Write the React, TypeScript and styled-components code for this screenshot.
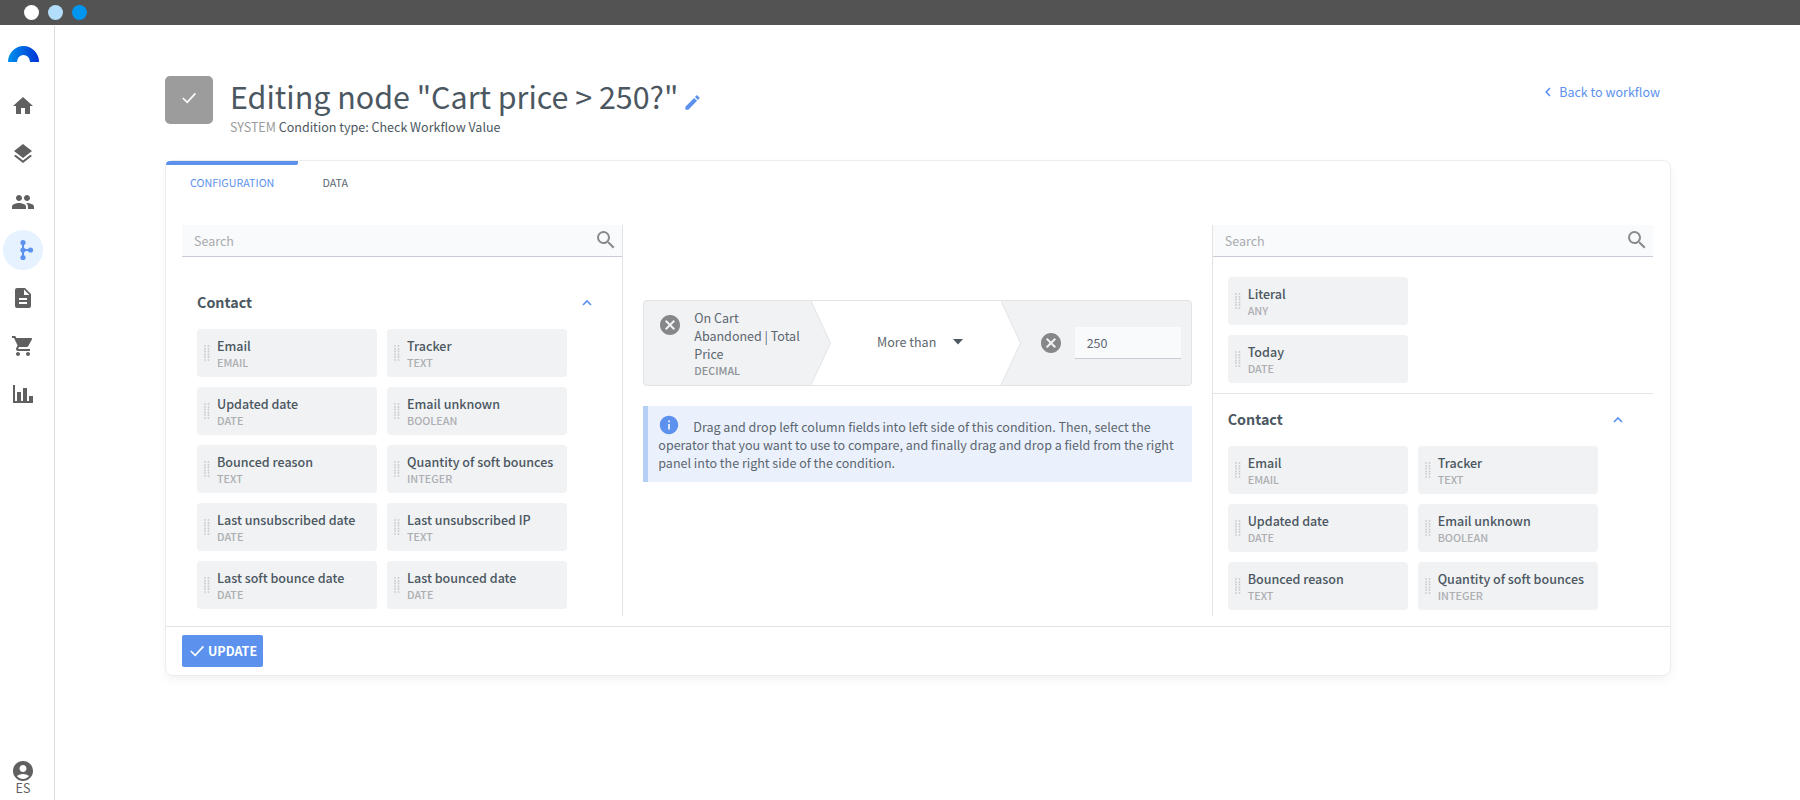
import React, { useState } from 'react';
import styled, { createGlobalStyle, css } from 'styled-components';
import {
  MdAccountCircle,
  MdCancel,
  MdDescription,
  MdEdit,
  MdGroup,
  MdHome,
  MdInfo,
  MdLayers,
  MdSearch,
  MdShoppingCart,
} from 'react-icons/md';

const color = {
  text: '#4b5761',
  body: '#5c6670',
  muted: '#acaeb1',
  icon: '#606060',
  primary: '#5c92ee',
  line: '#e2e3e5',
  panel: '#f1f2f4',
  field: '#f8fafc',
};

const GlobalStyle = createGlobalStyle`
  *, *::before, *::after { box-sizing: border-box; }
  body {
    margin: 0;
    background: #fff;
    color: ${color.text};
    font-family: 'Source Sans Pro', 'Noto Sans CJK SC', sans-serif;
    font-size: 14px;
    line-height: 18px;
    /* keeps the fallback face at the x-height of Source Sans */
    font-size-adjust: 0.486;
  }
  button, input, select {
    font: inherit;
    font-size-adjust: 0.486;
    color: inherit;
  }
  svg { display: block; flex: none; }
`;

/* ---------- shell ---------- */

const TopBar = styled.div`
  display: flex;
  align-items: center;
  gap: 9px;
  height: 25px;
  margin-bottom: 1px;
  padding-left: 24px;
  background: #535353;
`;

const WindowDot = styled.span<{ $fill: string }>`
  width: 15px;
  height: 15px;
  border-radius: 50%;
  background: ${(p) => p.$fill};
`;

const Shell = styled.div`
  display: flex;
  min-height: calc(100vh - 26px);
`;

const Sidebar = styled.nav`
  display: flex;
  flex-direction: column;
  flex: none;
  width: 55px;
  padding: 20px 0 7px;
  border-right: 1px solid #dcdcdc;
`;

const Logo = styled.a`
  margin: 0 0 24px 8px;
`;

const NavList = styled.ul`
  display: grid;
  gap: 8px;
  margin: 0;
  padding: 0 0 0 3px;
  list-style: none;
`;

const NavLink = styled.a<{ $active?: boolean }>`
  display: flex;
  align-items: center;
  justify-content: center;
  width: 40px;
  height: 40px;
  border-radius: 50%;
  color: ${(p) => (p.$active ? color.primary : color.icon)};
  background: ${(p) => (p.$active ? '#e6f2ff' : 'transparent')};
`;

const Account = styled.button`
  display: flex;
  flex-direction: column;
  align-items: center;
  width: 40px;
  margin: auto 0 0 3px;
  padding: 0;
  border: 0;
  background: none;
  color: ${color.icon};
  line-height: 10px;
`;

/* ---------- page header ---------- */

const Main = styled.main`
  flex: 1;
  min-width: 0;
  padding: 50px 129px 40px 110px;
`;

const Header = styled.header`
  display: flex;
  align-items: flex-start;
  margin-bottom: 24px;
`;

const NodeBadge = styled.div`
  display: flex;
  justify-content: center;
  width: 48px;
  height: 48px;
  margin-right: 17px;
  padding-top: 15px;
  border-radius: 5px;
  background: #9c9c9c;
  color: #fff;
`;

const HeaderText = styled.div`
  flex: 1;
`;

const TitleRow = styled.div`
  display: flex;
  align-items: flex-end;
  gap: 5px;
  margin-bottom: 2px;
`;

const Title = styled.h1`
  margin: 0;
  font-size: 34px;
  font-weight: 400;
  line-height: 40px;
`;

const EditButton = styled.button`
  padding: 0 0 4px;
  border: 0;
  background: none;
  color: ${color.primary};
`;

const Subtitle = styled.p`
  margin: 0;
`;

const Origin = styled.span`
  color: #9c9c9c;
`;

const BackLink = styled.a`
  display: flex;
  align-items: center;
  gap: 8px;
  padding: 7px 11px 0 0;
  color: ${color.primary};
  text-decoration: none;
`;

/* ---------- card ---------- */

const Card = styled.section`
  border: 1px solid #ececec;
  border-radius: 8px;
  box-shadow: 0 4px 10px rgba(0, 0, 0, 0.05);
`;

const Tabs = styled.div`
  display: flex;
  margin-bottom: 30px;
`;

const Tab = styled.button<{ $active?: boolean }>`
  position: relative;
  padding: 14px 24px 4px;
  border: 0;
  background: none;
  color: ${color.body};
  font-size: 12px;
  line-height: 16px;
  ${(p) =>
    p.$active &&
    css`
      color: ${color.primary};
      &::before {
        content: '';
        position: absolute;
        inset: 0 0 auto 0;
        height: 4px;
        border-radius: 8px 0 4px 0;
        background: ${color.primary};
      }
    `}
`;

const Columns = styled.div`
  display: grid;
  grid-template-columns: 3fr 4fr 3fr;
  padding: 0 17px 10px 16px;
`;

const FieldPanel = styled.div<{ $side: 'left' | 'right' }>`
  min-width: 0;
  ${(p) => (p.$side === 'left' ? 'border-right' : 'border-left')}: 1px solid ${color.line};
  padding-bottom: 6px;
`;

const SearchBox = styled.label`
  display: flex;
  height: 32px;
  margin-bottom: 20px;
  padding: 0 4px 0 12px;
  border-bottom: 1px solid #c8ccd6;
  background: ${color.field};
  color: #8a8a8a;
  svg { margin-top: 3px; }
`;

const SearchInput = styled.input`
  flex: 1;
  min-width: 0;
  padding: 0;
  border: 0;
  outline: 0;
  background: none;
  &::placeholder { color: #a9abae; opacity: 1; }
`;

const GroupHeader = styled.button`
  display: flex;
  align-items: center;
  justify-content: space-between;
  width: 100%;
  padding: 13px 30px 15px 15px;
  border: 0;
  background: none;
  font-size: 16px;
  font-weight: 700;
  line-height: 24px;
  text-align: left;
`;

const ChipGrid = styled.div<{ $columns: number }>`
  display: grid;
  grid-template-columns: repeat(${(p) => p.$columns}, 180px);
  gap: 10px;
  padding-left: 15px;
`;

const Divider = styled.hr`
  height: 1px;
  margin: 10px 0 0;
  border: 0;
  background: ${color.line};
`;

const ChipBox = styled.div`
  display: flex;
  align-items: center;
  gap: 7px;
  height: 48px;
  padding-left: 7px;
  border-radius: 4px;
  background: ${color.panel};
  cursor: grab;
`;

const ChipText = styled.div`
  padding-top: 2px;
  white-space: nowrap;
`;

const ChipName = styled.div`
  font-weight: 500;
`;

const TypeLabel = styled.div`
  color: ${color.muted};
  font-size: 12px;
  font-weight: 500;
  line-height: 16px;
`;

/* ---------- condition ---------- */

const Workspace = styled.div`
  padding: 75px 20px 0;
`;

const Condition = styled.div`
  display: grid;
  grid-template-columns: minmax(0, 7fr) minmax(0, 8fr) minmax(0, 8fr);
  min-height: 86px;
  margin-bottom: 20px;
  border: 1px solid ${color.line};
  border-radius: 4px;
  background: ${color.panel};
  color: ${color.body};
`;

const LeftOperand = styled.div`
  display: flex;
  align-items: flex-start;
  gap: 12px;
  padding: 8px 6px 6px 14px;
`;

const Operator = styled.div`
  position: relative;
  display: flex;
  align-items: center;
  justify-content: center;
  padding: 0 0 2px 29px;
  background: #fff;
`;

const RightOperand = styled.div`
  position: relative;
  display: flex;
  align-items: center;
  gap: 12px;
  padding: 0 10px 0 38px;
`;

const TipSvg = styled.svg`
  position: absolute;
  top: 0;
  left: 0;
  width: 20px;
  height: 100%;
`;

const OperandText = styled.div`
  min-width: 0;
`;

const OperandType = styled(TypeLabel)`
  color: #8c9094;
`;

const RemoveButton = styled.button`
  padding: 0;
  border: 0;
  background: none;
  color: #858788;
`;

const LeftRemove = styled(RemoveButton)`
  margin-top: 4px;
`;

const SelectWrap = styled.label`
  display: flex;
  align-items: center;
`;

const OperatorSelect = styled.select`
  appearance: none;
  padding: 0 26px 0 0;
  margin-right: -10px;
  border: 0;
  outline: 0;
  background: none;
`;

const ValueInput = styled.input`
  flex: 1;
  min-width: 0;
  height: 32px;
  padding: 0 12px;
  border: 0;
  border-bottom: 1px solid #c8ccd6;
  outline: 0;
  background: ${color.field};
`;

const Hint = styled.p`
  margin: 0;
  padding: 12px 15px 10px 10px;
  border-left: 5px solid #b3cff5;
  background: #eaf1fc;
  color: ${color.body};
  svg {
    float: left;
    margin: -4px 13px 0 0;
    color: ${color.primary};
  }
`;

/* ---------- footer ---------- */

const Footer = styled.footer`
  padding: 8px 16px;
  border-top: 1px solid ${color.line};
`;

const UpdateButton = styled.button`
  display: flex;
  align-items: center;
  gap: 4px;
  height: 32px;
  padding: 0 6px 0 8px;
  border: 0;
  border-radius: 2px;
  background: ${color.primary};
  color: #fff;
  font-weight: 700;
`;

/* ---------- drawings ---------- */

const LogoMark = () => (
  <svg width="31" height="16" viewBox="0 0 31 16" aria-hidden="true">
    <defs>
      <linearGradient id="logo" x1="0" x2="1">
        <stop offset="0" stopColor="#0092ec" />
        <stop offset="1" stopColor="#0033d6" />
      </linearGradient>
    </defs>
    <path d="M0 16a15.500 16 0 0 1 31 0h-9a6.500 7 0 0 0-13 0z" fill="url(#logo)" />
  </svg>
);

const FlowIcon = () => (
  <svg width="24" height="24" viewBox="0 0 24 24" fill="currentColor" aria-hidden="true">
    <path d="M12 4.500V19.500M12 12H19.500" stroke="currentColor" strokeWidth="2" />
    <circle cx="12" cy="4.500" r="2.600" />
    <circle cx="12" cy="12" r="2.600" />
    <circle cx="12" cy="19.500" r="2.600" />
    <circle cx="19.500" cy="12" r="2.600" />
  </svg>
);

const ChartIcon = () => (
  <svg width="24" height="24" viewBox="0 0 24 24" fill="currentColor" aria-hidden="true">
    <path d="M2 3h2v16h2V10h4v9h2V6h4v13h2v-5h4v7H2z" />
  </svg>
);

const CheckIcon = ({ size = 14 }: { size?: number }) => (
  <svg width={size} height={size} viewBox="0 0 14 14" fill="none" stroke="currentColor" strokeWidth="1.600" aria-hidden="true">
    <path d="M.8 7l4.400 4.400L13.400 2.400" />
  </svg>
);

const ChevronUp = () => (
  <svg width="10" height="8" viewBox="0 0 10 8" fill="none" stroke={color.primary} strokeWidth="1.700" aria-hidden="true">
    <path d="M1 7l4-4 4 4" />
  </svg>
);

const ChevronLeft = () => (
  <svg width="6" height="10" viewBox="0 0 6 10" fill="none" stroke="currentColor" strokeWidth="1.600" aria-hidden="true">
    <path d="M5 1L1.200 5 5 9" />
  </svg>
);

const Caret = () => (
  <svg width="10" height="6" viewBox="0 0 10 6" fill={color.text} aria-hidden="true">
    <path d="M0 0h10L5 5.500z" />
  </svg>
);

const DragDots = () => (
  <svg width="6" height="16" viewBox="0 0 6 16" fill="#c9ccd0" aria-hidden="true">
    {[1, 4, 6.5, 9.5, 12, 15].map((y) => (
      <React.Fragment key={y}>
        <circle cx="1" cy={y} r="0.900" />
        <circle cx="4.500" cy={y} r="0.900" />
      </React.Fragment>
    ))}
  </svg>
);

const Tip = ({ fill }: { fill: string }) => (
  <TipSvg viewBox="0 0 20 84" preserveAspectRatio="none" aria-hidden="true">
    <path d="M0 0L19.500 42 0 84z" fill={fill} />
    <path d="M0 0L19.500 42 0 84" fill="none" stroke={color.line} />
  </TipSvg>
);

/* ---------- data ---------- */

type Field = { name: string; type: string };

const contactFields: Field[] = [
  { name: 'Email', type: 'EMAIL' },
  { name: 'Tracker', type: 'TEXT' },
  { name: 'Updated date', type: 'DATE' },
  { name: 'Email unknown', type: 'BOOLEAN' },
  { name: 'Bounced reason', type: 'TEXT' },
  { name: 'Quantity of soft bounces', type: 'INTEGER' },
  { name: 'Last unsubscribed date', type: 'DATE' },
  { name: 'Last unsubscribed IP', type: 'TEXT' },
  { name: 'Last soft bounce date', type: 'DATE' },
  { name: 'Last bounced date', type: 'DATE' },
];

const valueFields: Field[] = [
  { name: 'Literal', type: 'ANY' },
  { name: 'Today', type: 'DATE' },
];

const navItems = [
  { label: 'Home', icon: <MdHome size={24} /> },
  { label: 'Layers', icon: <MdLayers size={24} /> },
  { label: 'Contacts', icon: <MdGroup size={24} /> },
  { label: 'Workflows', icon: <FlowIcon />, active: true },
  { label: 'Documents', icon: <MdDescription size={24} /> },
  { label: 'Store', icon: <MdShoppingCart size={24} /> },
  { label: 'Reports', icon: <ChartIcon /> },
];

/* ---------- parts ---------- */

const Chips = ({ fields, columns = 2 }: { fields: Field[]; columns?: number }) => (
  <ChipGrid $columns={columns}>
    {fields.map((f) => (
      <ChipBox key={f.name} draggable>
        <DragDots />
        <ChipText>
          <ChipName>{f.name}</ChipName>
          <TypeLabel>{f.type}</TypeLabel>
        </ChipText>
      </ChipBox>
    ))}
  </ChipGrid>
);

const FieldGroup = ({ title, fields }: { title: string; fields: Field[] }) => {
  const [open, setOpen] = useState(true);
  return (
    <>
      <GroupHeader type="button" aria-expanded={open} onClick={() => setOpen(!open)}>
        {title}
        <ChevronUp />
      </GroupHeader>
      {open && <Chips fields={fields} />}
    </>
  );
};

const Search = ({ label }: { label: string }) => (
  <SearchBox>
    <SearchInput type="text" placeholder="Search" aria-label={label} />
    <MdSearch size={24} />
  </SearchBox>
);

export default function App() {
  const [value, setValue] = useState('250');
  return (
    <>
      <GlobalStyle />
      <TopBar>
        <WindowDot $fill="#fff" />
        <WindowDot $fill="#b3defb" />
        <WindowDot $fill="#0095ee" />
      </TopBar>
      <Shell>
        <Sidebar aria-label="Main">
          <Logo href="#" aria-label="Start">
            <LogoMark />
          </Logo>
          <NavList>
            {navItems.map((item) => (
              <li key={item.label}>
                <NavLink href="#" aria-label={item.label} $active={item.active}>
                  {item.icon}
                </NavLink>
              </li>
            ))}
          </NavList>
          <Account type="button">
            <MdAccountCircle size={24} />
            ES
          </Account>
        </Sidebar>
        <Main>
          <Header>
            <NodeBadge>
              <CheckIcon />
            </NodeBadge>
            <HeaderText>
              <TitleRow>
                <Title>Editing node "Cart price &gt; 250?"</Title>
                <EditButton type="button" aria-label="Edit name">
                  <MdEdit size={19} />
                </EditButton>
              </TitleRow>
              <Subtitle>
                <Origin>SYSTEM</Origin> Condition type: Check Workflow Value
              </Subtitle>
            </HeaderText>
            <BackLink href="#">
              <ChevronLeft />
              Back to workflow
            </BackLink>
          </Header>
          <Card>
            <Tabs role="tablist">
              <Tab type="button" role="tab" aria-selected="true" $active>
                CONFIGURATION
              </Tab>
              <Tab type="button" role="tab" aria-selected="false">
                DATA
              </Tab>
            </Tabs>
            <Columns>
              <FieldPanel $side="left">
                <Search label="Search left fields" />
                <FieldGroup title="Contact" fields={contactFields} />
              </FieldPanel>
              <Workspace>
                <Condition>
                  <LeftOperand>
                    <LeftRemove type="button" aria-label="Remove field">
                      <MdCancel size={24} />
                    </LeftRemove>
                    <OperandText>
                      On Cart Abandoned | Total Price
                      <OperandType>DECIMAL</OperandType>
                    </OperandText>
                  </LeftOperand>
                  <Operator>
                    <Tip fill={color.panel} />
                    <SelectWrap>
                      <OperatorSelect aria-label="Operator">
                        <option>More than</option>
                      </OperatorSelect>
                      <Caret />
                    </SelectWrap>
                  </Operator>
                  <RightOperand>
                    <Tip fill="#fff" />
                    <RemoveButton type="button" aria-label="Remove value">
                      <MdCancel size={24} />
                    </RemoveButton>
                    <ValueInput
                      type="text"
                      aria-label="Value"
                      value={value}
                      onChange={(e) => setValue(e.target.value)}
                    />
                  </RightOperand>
                </Condition>
                <Hint>
                  <MdInfo size={22} />
                  Drag and drop left column fields into left side of this condition. Then, select the operator that
                  you want to use to compare, and finally drag and drop a field from the right panel into the right
                  side of the condition.
                </Hint>
              </Workspace>
              <FieldPanel $side="right">
                <Search label="Search right fields" />
                <Chips fields={valueFields} columns={1} />
                <Divider />
                <FieldGroup title="Contact" fields={contactFields.slice(0, 6)} />
              </FieldPanel>
            </Columns>
            <Footer>
              <UpdateButton type="button">
                <CheckIcon />
                UPDATE
              </UpdateButton>
            </Footer>
          </Card>
        </Main>
      </Shell>
    </>
  );
}
